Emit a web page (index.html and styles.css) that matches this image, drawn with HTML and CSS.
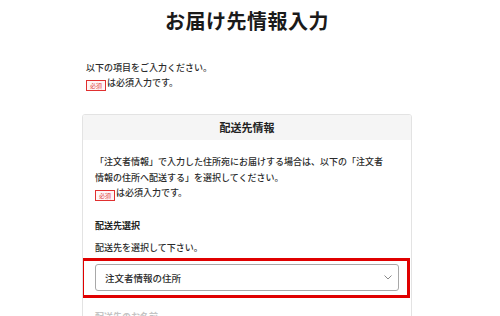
FILE: index.html
```html
<!DOCTYPE html>
<html lang="ja">
<head>
<meta charset="utf-8">
<title>お届け先情報入力</title>
<link rel="stylesheet" href="styles.css">
</head>
<body>
<div class="page">
  <h1 class="title">お届け先情報入力</h1>
  <div class="intro">
    <p>以下の項目をご入力ください。</p>
    <p><span class="badge">必須</span>は必須入力です。</p>
  </div>
  <section class="card">
    <header class="card-head">配送先情報</header>
    <div class="card-body">
      <p class="note">「注文者情報」で入力した住所宛にお届けする場合は、以下の「注文者<br>情報の住所へ配送する」を選択してください。<br><span class="badge">必須</span>は必須入力です。</p>
      <h2 class="label">配送先選択</h2>
      <p class="help">配送先を選択して下さい。</p>
      <div class="select-wrap">
        <div class="select">
          <span class="select-text">注文者情報の住所</span>
          <svg class="chev" width="8" height="5" viewBox="0 0 8 5"><polyline points="0.5,0.5 4,4 7.5,0.5" fill="none" stroke="#8a8a8a" stroke-width="1"/></svg>
        </div>
        <div class="highlight"></div>
      </div>
      <h2 class="label next">配送先のお名前</h2>
    </div>
  </section>
</div>
</body>
</html>
```
FILE: styles.css
```css
* { box-sizing: border-box; }
html, body { margin: 0; padding: 0; background: #fff; }
body {
  font-family: "Noto Sans CJK JP", "Noto Sans", sans-serif;
  color: #2b2b2b;
  font-weight: 500;
  overflow: hidden;
}
p, h1, h2 { margin: 0; }
.page {
  width: 330px;
  margin-left: 82px;
}
.title {
  margin-top: 9px;
  font-size: 20px;
  line-height: 24px;
  font-weight: 700;
  text-align: center;
  color: #1a1a1a;
  letter-spacing: 0.5px;
}
.intro {
  margin-top: 27px;
  padding-left: 4px;
  font-size: 9px;
  line-height: 15px;
}
.badge {
  display: inline-block;
  width: 20px;
  height: 11px;
  border: 1px solid #e03030;
  background: #fff5f5;
  color: #e04040;
  font-size: 6px;
  font-weight: 400;
  line-height: 9px;
  text-align: center;
  vertical-align: -2px;
  margin-right: 1px;
}
.card {
  margin-top: 23px;
  border: 1px solid #e3e3e3;
  border-radius: 3px;
  overflow: hidden;
}
.card-head {
  height: 25px;
  line-height: 25px;
  background: #f5f5f5;
  text-align: center;
  font-size: 11px;
  font-weight: 700;
  color: #222;
}
.card-body {
  padding: 14px 12px 0 12px;
}
.note {
  font-size: 9px;
  line-height: 15.5px;
  white-space: nowrap;
}
.label {
  margin-top: 17px;
  font-size: 9px;
  line-height: 15px;
  font-weight: 700;
  color: #222;
}
.help {
  margin-top: 7px;
  font-size: 9px;
  line-height: 15px;
}
.select-wrap {
  position: relative;
  margin-top: 9px;
}
.select {
  display: flex;
  align-items: center;
  justify-content: space-between;
  height: 27px;
  border: 1px solid #a8a8a8;
  border-radius: 3px;
  padding: 0 6px 0 9px;
  font-size: 9.5px;
  color: #2b2b2b;
}
.chev { display: block; }
.highlight {
  position: absolute;
  left: -14px;
  right: -11px;
  top: -6px;
  bottom: -7px;
  border: 3px solid #e00000;
}
.label.next {
  margin-top: 18px;
  color: #c4c4c4;
}
```
